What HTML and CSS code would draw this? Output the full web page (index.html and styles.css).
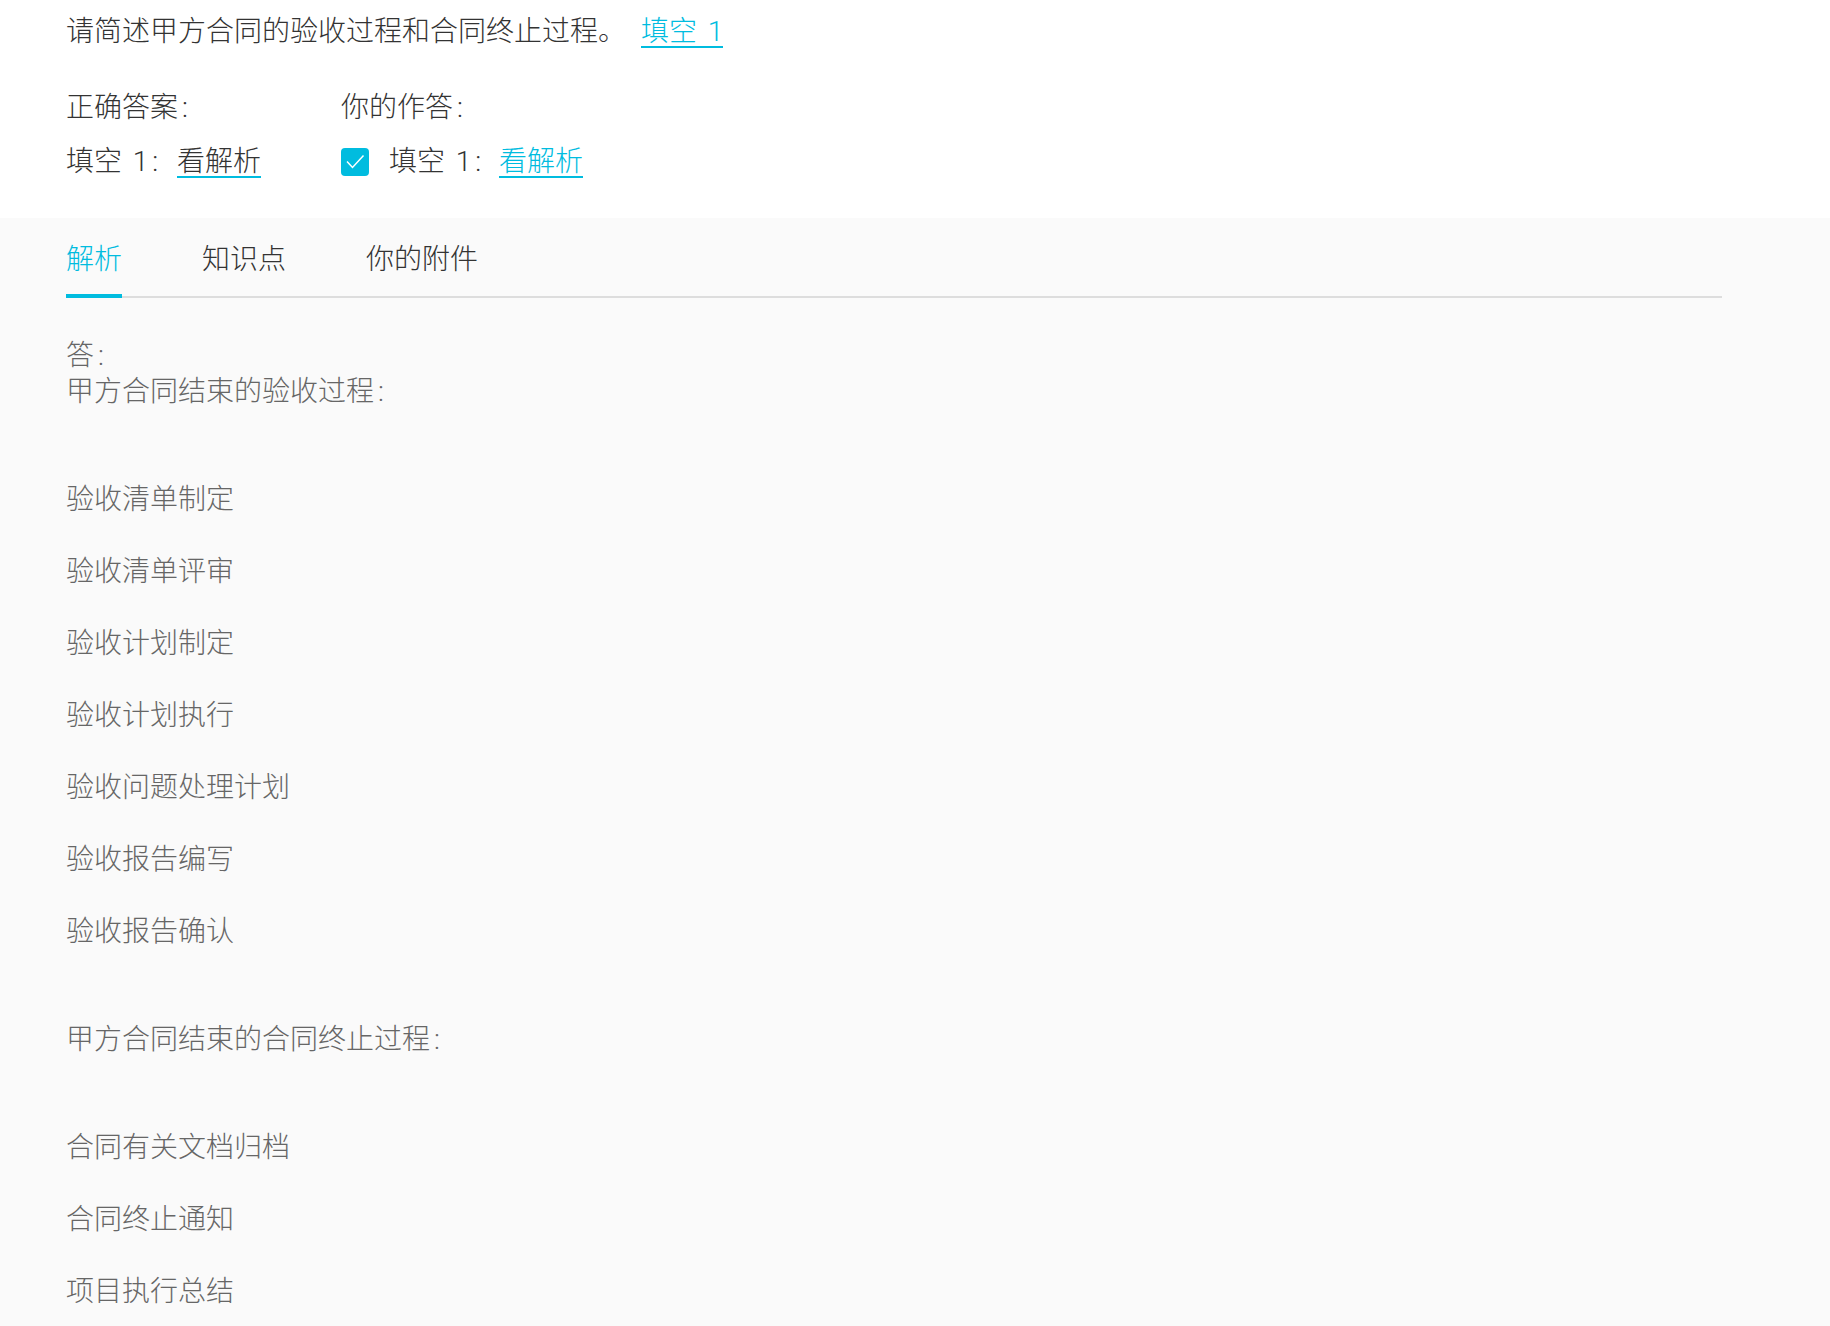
FILE: index.html
```html
<!DOCTYPE html>
<html lang="zh-CN">
<head>
<meta charset="utf-8">
<title>解析</title>
<link rel="stylesheet" href="styles.css">
</head>
<body>
<section class="question">
  <p class="stem"><span>请简述甲方合同的验收过程和合同终止过程。</span><a class="blank">填空 1</a></p>
  <div class="answers">
    <div class="answer correct">
      <div class="label">正确答案<span class="colon">:</span></div>
      <div class="row"><span class="key">填空 1<span class="colon">:</span></span><span class="val">看解析</span></div>
    </div>
    <div class="answer mine">
      <div class="label">你的作答<span class="colon">:</span></div>
      <div class="row">
        <span class="check"><svg viewBox="0 0 28 28" width="28" height="28"><path d="M6 13.5l5.5 6 11-12" fill="none" stroke="#fff" stroke-width="1.5"/></svg></span>
        <span class="key">填空 1<span class="colon">:</span></span><span class="val link">看解析</span>
      </div>
    </div>
  </div>
</section>
<section class="detail">
  <nav class="tabs">
    <a class="tab active">解析</a>
    <a class="tab">知识点</a>
    <a class="tab">你的附件</a>
  </nav>
  <div class="body">
    <p>答<span class="colon">:</span><br>甲方合同结束的验收过程<span class="colon">:</span></p>
    <p class="after-head">验收清单制定</p>
    <p>验收清单评审</p>
    <p>验收计划制定</p>
    <p>验收计划执行</p>
    <p>验收问题处理计划</p>
    <p>验收报告编写</p>
    <p>验收报告确认</p>
    <p class="after-head">甲方合同结束的合同终止过程<span class="colon">:</span></p>
    <p class="after-head">合同有关文档归档</p>
    <p>合同终止通知</p>
    <p>项目执行总结</p>
  </div>
</section>
</body>
</html>
```
FILE: styles.css
```css
* { box-sizing: border-box; }
html, body { margin: 0; padding: 0; height: 100%; overflow: hidden; }
body {
  background: #fff;
  font-family: Roboto, "Noto Sans CJK SC", sans-serif;
  font-size: 28px;
  font-weight: 300;
  line-height: 36px;
  word-spacing: 4px;
  color: #333;
}
.colon { margin-left: 4px; }
.question { height: 218px; padding: 14px 0 0 66px; }
.stem { margin: 0; display: flex; height: 34px; }
.blank { margin-left: 15px; color: #00bcdf; border-bottom: 2px solid #00bcdf; height: 34px; line-height: 36px; }
.answers { display: flex; margin-top: 42px; }
.answer { display: flex; flex-direction: column; gap: 18px; }
.correct { width: 275px; }
.label { height: 36px; }
.row { display: flex; align-items: flex-start; height: 36px; }
.key { width: 110px; flex: none; }
.correct .key { width: 111px; }
.val { border-bottom: 2px solid #00bcdf; height: 34px; }
.link { color: #00bcdf; }
.check { width: 28px; height: 28px; margin-top: 4px; background: #00bcdf; border-radius: 4px; margin-right: 20px; display: block; flex: none; }
.check svg { display: block; }
.detail { background: #fafafa; height: 1108px; padding: 0 108px 0 66px; }
.tabs { display: flex; gap: 80px; height: 80px; padding-top: 24px; border-bottom: 2px solid #ddd; }
.tab { position: relative; height: 56px; }
.tab.active { color: #00bcdf; }
.tab.active::after { content: ""; position: absolute; left: 0; right: 0; top: 52px; height: 4px; background: #00bcdf; }
.body { padding-top: 40px; color: #666; }
.body p { margin: 0 0 36px; }
.body p.after-head { margin-top: 72px; }
```
